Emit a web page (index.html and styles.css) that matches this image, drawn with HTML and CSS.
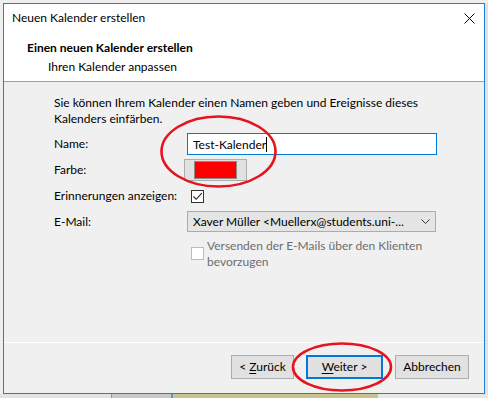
FILE: index.html
```html
<!DOCTYPE html>
<html lang="de">
<head>
<meta charset="utf-8">
<title>Neuen Kalender erstellen</title>
<link rel="stylesheet" href="styles.css">
</head>
<body>
<div class="screen">
  <div class="topstrip"></div>
  <div class="middle">
    <div class="leftstrip"></div>
    <div class="dialog">
      <div class="titlebar">
        <span class="title">Neuen Kalender erstellen</span>
        <svg class="close" width="11" height="11" viewBox="0 0 11 11"><path d="M0.5 0.5 L10.5 10.5 M10.5 0.5 L0.5 10.5" stroke="#000" stroke-width="1" fill="none"/></svg>
      </div>
      <div class="header">
        <div class="h1">Einen neuen Kalender erstellen</div>
        <div class="h2">Ihren Kalender anpassen</div>
      </div>
      <div class="body">
        <div class="content">
          <div class="desc">Sie können Ihrem Kalender einen Namen geben und Ereignisse dieses<br>Kalenders einfärben.</div>
          <div class="row row-name">
            <span class="label">Name:</span>
            <div class="input"><span>Test-Kalender</span><span class="caret"></span></div>
          </div>
          <div class="row row-color">
            <span class="label">Farbe:</span>
            <div class="colorbtn"><span class="swatch"></span></div>
          </div>
          <div class="row row-check">
            <span class="label">Erinnerungen anzeigen:</span>
            <span class="checkbox"><svg width="11" height="11" viewBox="0 0 11 11"><path d="M1.5 5.5 L4.2 8.3 L9.8 2.2" stroke="#222" stroke-width="1.1" fill="none"/></svg></span>
          </div>
          <div class="row row-mail">
            <span class="label">E-Mail:</span>
            <div class="select"><span>Xaver Müller &lt;Muellerx@students.uni-...</span><svg width="9" height="5" viewBox="0 0 9 5"><path d="M0.5 0.5 L4.5 4.5 L8.5 0.5" stroke="#333" stroke-width="1" fill="none"/></svg></div>
          </div>
          <div class="row-disabled">
            <span class="checkbox disabled"></span>
            <span class="dtext">Versenden der E-Mails über den Klienten<br>bevorzugen</span>
          </div>
        </div>
        <div class="buttons">
          <button class="btn btn-back">&lt; <u>Z</u>urück</button>
          <button class="btn btn-next"><u>W</u>eiter &gt;</button>
          <button class="btn btn-cancel">Abbrechen</button>
        </div>
      </div>
    </div>
    <div class="rightstrip"></div>
  </div>
  <div class="bottomstrip">
    <span class="seg seg-a"></span>
    <span class="seg seg-b"></span>
    <span class="seg seg-c"></span>
    <span class="seg seg-d"></span>
    <span class="seg seg-e"></span>
    <span class="seg seg-f"></span>
  </div>
  <svg class="annot" width="488" height="398" viewBox="0 0 488 398">
    <ellipse cx="218.5" cy="151.5" rx="57" ry="35" fill="none" stroke="#e5141e" stroke-width="2.6"/>
    <ellipse cx="342" cy="367" rx="49" ry="23.5" fill="none" stroke="#e5141e" stroke-width="2.6"/>
  </svg>
</div>
</body>
</html>
```

FILE: styles.css
```css
* { box-sizing: border-box; }
html, body { margin: 0; padding: 0; }
body {
  font-family: "Lato", "Noto Sans", sans-serif;
  font-size: 12px;
  color: #000;
  background: #eaeaea;
}
.screen {
  position: relative;
  width: 488px;
  height: 398px;
  overflow: hidden;
  display: flex;
  flex-direction: column;
}
.topstrip { height: 3px; background: #eeeeee; flex: none; }
.middle { height: 391px; display: flex; flex: none; }
.leftstrip { width: 3px; background: #efefef; }
.rightstrip { width: 3px; background: #e2e2e2; }
.dialog {
  width: 482px;
  height: 391px;
  border: 1px solid #1e7fd3;
  background: #f0f0f0;
  display: flex;
  flex-direction: column;
}
.titlebar {
  height: 27px;
  background: #fff;
  display: flex;
  align-items: center;
  justify-content: space-between;
  padding: 0 9px 0 8px;
}
.title { line-height: 16px; }
.close { display: block; margin-top: 1px; }
.header {
  height: 51px;
  background: #fff;
  border-bottom: 1px solid #a0a0a0;
  padding-top: 9px;
}
.h1 { font-weight: bold; line-height: 16px; padding-left: 23px; }
.h2 { line-height: 16px; padding-left: 44px; margin-top: 3px; }
.body { flex: 1; display: flex; flex-direction: column; }
.content { flex: 1; padding-left: 50px; padding-top: 13px; }
.desc { line-height: 16px; white-space: nowrap; }
.row { display: flex; align-items: center; }
.label { width: 133px; flex: none; line-height: 16px; white-space: nowrap; }
.row-name { margin-top: 6px; height: 22px; }
.input {
  width: 250px;
  height: 22px;
  border: 1px solid #0078d7;
  background: #fff;
  display: flex;
  align-items: center;
  padding-left: 5px;
}
.caret { width: 1px; height: 15px; background: #000; }
.row-color { margin-top: 4px; height: 22px; }
.colorbtn {
  margin-left: -3px;
  width: 63px;
  height: 22px;
  border: 1px solid #adadad;
  background: #e1e1e1;
  display: flex;
  align-items: center;
  padding-left: 9px;
}
.swatch {
  width: 43px;
  height: 18px;
  border: 1px solid #8a8a8a;
  background: #ff0000;
}
.row-check { margin-top: 5px; height: 20px; }
.checkbox {
  width: 13px;
  height: 13px;
  border: 1px solid #333;
  background: #fff;
  margin-left: 4px;
  display: flex;
  align-items: center;
  justify-content: center;
}
.checkbox svg { display: block; }
.row-mail { margin-top: 5px; height: 21px; }
.select {
  width: 249px;
  height: 21px;
  border: 1px solid #acacac;
  background: #e5e5e5;
  display: flex;
  align-items: center;
  justify-content: space-between;
  padding: 0 5px 0 5px;
}
.select svg { display: block; }
.row-disabled {
  margin-top: 6px;
  margin-left: 137px;
  display: flex;
  align-items: flex-start;
}
.checkbox.disabled {
  margin-left: 0;
  margin-top: 9px;
  border-color: #bcbcbc;
  flex: none;
}
.dtext { color: #6d6d6d; line-height: 16px; margin-left: 3px; white-space: nowrap; }
.buttons {
  height: 51px;
  border-top: 1px solid #ffffff;
  display: flex;
  justify-content: flex-end;
  align-items: flex-start;
  padding-top: 12px;
  padding-right: 15px;
}
.btn {
  font-family: inherit;
  font-size: 12px;
  color: #000;
  height: 24px;
  background: #e1e1e1;
  border: 1px solid #adadad;
  padding: 0;
  margin: 0;
  line-height: 16px;
}
.btn u { text-decoration-thickness: 1px; text-underline-offset: 2px; }
.btn-back { width: 63px; }
.btn-next { width: 77px; margin-left: 12px; border: 2px solid #0078d7; }
.btn-cancel { width: 74px; margin-left: 12px; }
.bottomstrip { height: 4px; display: flex; flex: none; }
.seg { display: block; height: 4px; }
.seg-a { width: 111px; background: #e3e3e3; }
.seg-b { width: 1px; background: #7f9db9; }
.seg-c { width: 59px; background: #c8c8c8; }
.seg-d { width: 2px; background: #5f93cf; }
.seg-e { width: 205px; background: #c9c38f; }
.seg-f { flex: 1; background: #e8e8e8; }
.annot { position: absolute; left: 0; top: 0; pointer-events: none; }
```
